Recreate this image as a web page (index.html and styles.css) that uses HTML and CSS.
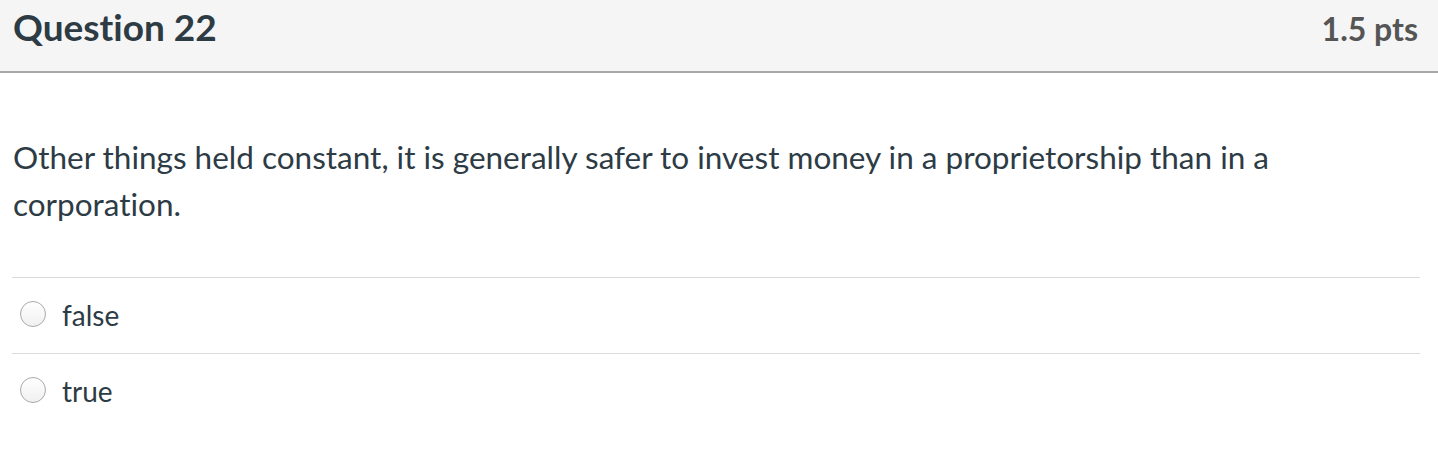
FILE: index.html
```html
<!DOCTYPE html>
<html lang="en">
<head>
<meta charset="utf-8">
<title>Question 22</title>
<link rel="stylesheet" href="styles.css">
</head>
<body>
<div class="question">
  <div class="header">
    <h2 class="title">Question 22</h2>
    <span class="points">1.5 pts</span>
  </div>
  <div class="content">
    <p class="text">Other things held constant, it is generally safer to invest money in a proprietorship than in a corporation.</p>
    <div class="answers">
      <label class="answer"><span class="radio"></span><span class="label">false</span></label>
      <label class="answer"><span class="radio"></span><span class="label">true</span></label>
    </div>
  </div>
</div>
</body>
</html>
```

FILE: styles.css
```css
html, body {
  margin: 0;
  padding: 0;
  background: #ffffff;
}
body {
  font-family: Lato, "Open Sans", sans-serif;
  color: #2d3b45;
  font-variant-ligatures: none;
}
.header {
  display: flex;
  align-items: baseline;
  justify-content: space-between;
  box-sizing: border-box;
  height: 73px;
  background: #f5f5f5;
  border-bottom: 2px solid #a8a8a8;
  padding: 5px 20px 0 13px;
}
.title {
  margin: 0;
  font-size: 37px;
  font-weight: 700;
  color: #2d3b45;
  line-height: 44px;
}
.points {
  font-size: 32px;
  font-weight: 700;
  color: #555555;
  line-height: 44px;
}
.content {
  padding: 0 18px 0 12px;
}
.text {
  margin: 0;
  padding: 61px 0 48px 1px;
  font-size: 31.5px;
  line-height: 1.5;
}
.answers {
  display: flex;
  flex-direction: column;
}
.answer {
  display: flex;
  align-items: center;
  height: 75px;
  border-top: 1px solid #dcdcdc;
  padding-left: 8px;
}
.radio {
  width: 26px;
  height: 26px;
  box-sizing: border-box;
  border-radius: 50%;
  border: 1px solid #a9a9a9;
  background: linear-gradient(#ffffff, #f0f0f0);
  margin: -3px 16px 0 0;
}
.label {
  font-size: 28px;
}
```
